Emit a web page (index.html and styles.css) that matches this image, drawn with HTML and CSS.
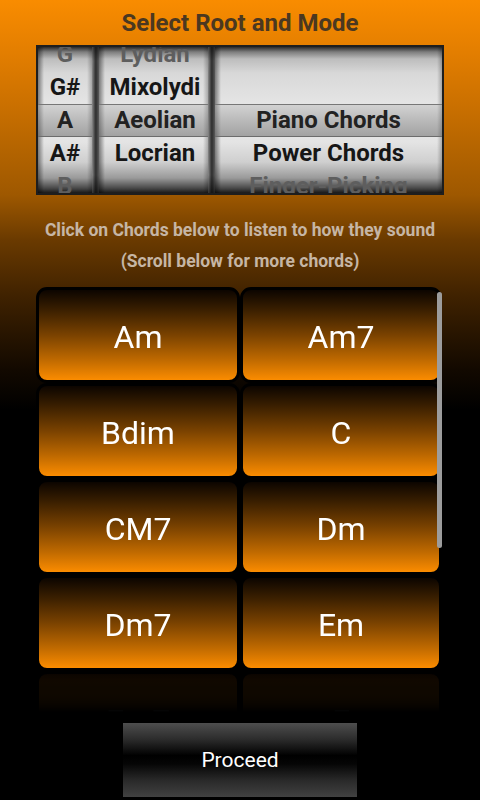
FILE: index.html
```html
<!DOCTYPE html>
<html>
<head>
<meta charset="utf-8">
<link rel="stylesheet" href="styles.css">
</head>
<body>
<div class="screen">
  <h1 class="title">Select Root and Mode</h1>
  <div class="picker">
    <div class="col col-root">
      <div class="list">
        <div class="item edge">G</div>
        <div class="item">G#</div>
        <div class="item sel">A</div>
        <div class="item">A#</div>
        <div class="item edge">B</div>
      </div>
    </div>
    <div class="sep"></div>
    <div class="col col-mode">
      <div class="list">
        <div class="item edge">Lydian</div>
        <div class="item">Mixolydi</div>
        <div class="item sel">Aeolian</div>
        <div class="item">Locrian</div>
        <div class="item edge"></div>
      </div>
    </div>
    <div class="sep"></div>
    <div class="col col-type">
      <div class="list">
        <div class="item edge"></div>
        <div class="item"></div>
        <div class="item sel">Piano Chords</div>
        <div class="item">Power Chords</div>
        <div class="item edge">Finger-Picking</div>
      </div>
    </div>
  </div>
  <p class="hint">Click on Chords below to listen to how they sound<br>(Scroll below for more chords)</p>
  <div class="chords-wrap">
    <div class="chords">
      <button class="chord">Am</button>
      <button class="chord">Am7</button>
      <button class="chord">Bdim</button>
      <button class="chord">C</button>
      <button class="chord">CM7</button>
      <button class="chord">Dm</button>
      <button class="chord">Dm7</button>
      <button class="chord">Em</button>
      <button class="chord">Em7</button>
      <button class="chord">F</button>
    </div>
    <div class="scrollbar"></div>
  </div>
  <div class="footer">
    <button class="proceed">Proceed</button>
  </div>
</div>
</body>
</html>
```
FILE: styles.css
```css
html, body {
  margin: 0;
  padding: 0;
  background: #000;
}
body {
  font-family: "Roboto", "Liberation Sans", sans-serif;
}
.screen {
  width: 480px;
  height: 800px;
  overflow: hidden;
  display: flex;
  flex-direction: column;
  background: linear-gradient(to bottom, #f98c00 0px, #e07c00 60px, #9e5800 195px, #6a3a00 240px, #402200 295px, #120900 370px, #000 410px);
}
.title {
  margin: 0;
  height: 45px;
  line-height: 46px;
  text-align: center;
  font-size: 24px;
  font-weight: 700;
  color: #4b3820;
}
.picker {
  margin: 0 36px;
  height: 146px;
  border: 2px solid #1e1e1e;
  display: flex;
  background: #222;
}
.col {
  overflow: hidden;
  background:
    linear-gradient(to right, rgba(0,0,0,0.45) 0, rgba(0,0,0,0) 6px, rgba(0,0,0,0) calc(100% - 5px), rgba(0,0,0,0.25) 100%),
    linear-gradient(to bottom, #2a2a2a 0, #7e7e7e 5px, #bdbdbd 12px, #d8d8d8 26px, #e6e6e6 60px, #e4e4e4 95px, #cfcfcf 115px, #9a9a9a 131px, #4a4a4a 141px, #1a1a1a 146px);
}
.col-root { width: 54px; }
.col-mode { width: 109px; }
.col-type { flex: 1; }
.sep {
  width: 7px;
  background:
    linear-gradient(to bottom, rgba(0,0,0,0.5) 0, rgba(0,0,0,0) 14px, rgba(0,0,0,0) 128px, rgba(0,0,0,0.6) 146px),
    linear-gradient(to right, #8a8a8a 0, #4a4a4a 35%, #2e2e2e 55%, #5a5a5a 100%);
}
.list {
  margin-top: -9px;
  display: flex;
  flex-direction: column;
}
.item {
  height: 33px;
  line-height: 33px;
  text-align: center;
  font-size: 24px;
  font-weight: 700;
  color: #161616;
  white-space: nowrap;
  overflow: hidden;
}
.col-mode .item { padding-left: 3px; }
.item.edge { color: #5e5e5e; }
.item.sel {
  box-sizing: border-box;
  line-height: 31px;
  color: #222;
  border-top: 1px solid #777;
  border-bottom: 1px solid #6c6c6c;
  background:
    linear-gradient(to right, rgba(0,0,0,0.3) 0, rgba(0,0,0,0) 6px, rgba(0,0,0,0) calc(100% - 5px), rgba(0,0,0,0.2) 100%),
    linear-gradient(to bottom, #d2d2d2 0, #bcbcbc 45%, #a2a2a2 100%);
}
.hint {
  margin: 20px 0 10px;
  text-align: center;
  font-size: 17.5px;
  font-weight: 700;
  line-height: 31px;
  color: #c6b6a5;
}
.chords-wrap {
  position: relative;
  margin: 0 38px 0 36px;
  height: 425px;
  overflow: hidden;
}
.chords {
  display: grid;
  grid-template-columns: 204px 202px;
  grid-auto-rows: 96px;
  -webkit-mask-image: linear-gradient(to bottom, #000 383px, rgba(0,0,0,0.35) 400px, rgba(0,0,0,0) 425px);
  mask-image: linear-gradient(to bottom, #000 383px, rgba(0,0,0,0.35) 400px, rgba(0,0,0,0) 425px);
}
.chord {
  margin: 0;
  padding: 3px 0 0;
  border: 3px solid #000;
  border-radius: 11px;
  background: linear-gradient(to bottom, #0c0500 0%, #3a1f00 22%, #7a4200 50%, #c06a00 78%, #fb8c00 100%);
  color: #fff;
  font-family: "Roboto", "Liberation Sans", sans-serif;
  font-size: 32px;
  font-weight: 400;
  text-align: center;
}
.scrollbar {
  position: absolute;
  left: 401px;
  top: 5px;
  width: 5px;
  height: 256px;
  border-radius: 3px;
  background: #9c9c9c;
}
.footer {
  margin-top: 11px;
  display: flex;
  justify-content: center;
}
.proceed {
  width: 234px;
  height: 74px;
  border: none;
  margin: 0;
  padding: 0;
  background: linear-gradient(to bottom, #4e4e4e 0%, #2c2c2c 22%, #000 44%, #050505 55%, #2a2a2a 78%, #414141 100%);
  color: #fff;
  font-family: "Roboto", "Liberation Sans", sans-serif;
  font-size: 21px;
  font-weight: 400;
}
```
